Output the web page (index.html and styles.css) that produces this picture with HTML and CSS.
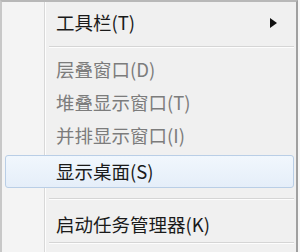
FILE: index.html
```html
<!DOCTYPE html>
<html lang="zh">
<head>
<meta charset="utf-8">
<link rel="stylesheet" href="styles.css">
</head>
<body>
<div class="menu">
  <div class="gutter"></div>
  <div class="list">
    <div class="item"><span class="label">工具栏(T)</span><span class="arrow"></span></div>
    <div class="sep first"></div>
    <div class="item disabled"><span class="label">层叠窗口(D)</span></div>
    <div class="item disabled"><span class="label">堆叠显示窗口(T)</span></div>
    <div class="item disabled"><span class="label">并排显示窗口(I)</span></div>
    <div class="item hover"><span class="label">显示桌面(S)</span></div>
    <div class="sep second"></div>
    <div class="item"><span class="label">启动任务管理器(K)</span></div>
    <div class="sep last"></div>
  </div>
</div>
</body>
</html>
```
FILE: styles.css
```css
html, body {
  margin: 0;
  padding: 0;
  background: #f7f7f7;
}
body {
  width: 300px;
  height: 252px;
  overflow: hidden;
}
.menu {
  position: relative;
  box-sizing: border-box;
  width: 298px;
  height: 260px;
  background: #f0f0f0;
  border-top: 2px solid #b8b8b8;
  border-left: 2px solid #c8c8c8;
  border-right: 2px solid #a0a0a0;
  font-family: "Noto Sans CJK SC", "Microsoft YaHei", sans-serif;
  font-size: 18.5px;
}
.gutter {
  position: absolute;
  left: 0;
  top: 0;
  bottom: 0;
  width: 42px;
  background: #f4f4f4;
  border-right: 1px solid #d8d8d8;
  box-shadow: 1px 0 0 #fdfdfd;
}
.list {
  display: flex;
  flex-direction: column;
  padding-top: 4px;
}
.item {
  position: relative;
  display: flex;
  align-items: center;
  height: 31px;
  margin: 0 2px 0 3px;
  padding-left: 50px;
  padding-right: 14px;
  color: #1a1a1a;
  border: 1px solid transparent;
  border-radius: 3px;
}
.item .label {
  flex: 1;
  line-height: 1;
  white-space: nowrap;
}
.item.disabled {
  color: #7c7c7c;
}
.item.hover {
  margin-top: 3px;
  background: linear-gradient(#f1f7fd, #e5eef9);
  border-color: #b9cee6;
}
.arrow {
  width: 0;
  height: 0;
  border-top: 5px solid transparent;
  border-bottom: 5px solid transparent;
  border-left: 7px solid #111;
  margin-right: 2px;
}
.sep {
  height: 1px;
  margin: 0 2px 0 47px;
  background: #d5d5d5;
  box-shadow: 0 1px 0 #fdfdfd;
}
.sep.first {
  margin-top: 7px;
  margin-bottom: 6px;
}
.sep.second {
  margin-top: 10px;
  margin-bottom: 9px;
}
.sep.last {
  margin-top: 1px;
}
```
